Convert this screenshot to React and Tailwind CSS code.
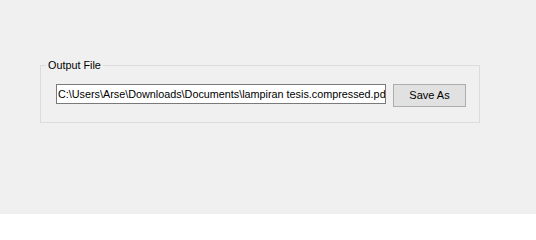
const OutputFileGroup = ({ path }) => {
  return (
    <div className="relative w-[440px] border border-[#dcdcdc] pt-[18px] pb-[15px] pl-[15px]">
      <span className="absolute -top-[7px] left-[5px] bg-[#f0f0f0] px-[2px] text-[10.8px] leading-[13px] text-black">
        Output File
      </span>
      <div className="flex items-start gap-[7px]">
        <div className="w-[330px] h-[20px] border border-[#7a7a7a] bg-white overflow-hidden whitespace-nowrap pl-[1px] text-[10.8px] leading-[18px] text-black">
          {path}
        </div>
        <button className="w-[73px] h-[23px] border border-[#adadad] bg-[#e1e1e1] text-[11px] leading-[21px] text-black">
          Save As
        </button>
      </div>
    </div>
  );
};

export default function App() {
  return (
    <div
      className="w-[536px] h-[214px] bg-[#f0f0f0] pt-[65px] pl-[40px]"
      style={{ fontFamily: '"Liberation Sans", Arial, sans-serif' }}
    >
      <OutputFileGroup path="C:\Users\Arse\Downloads\Documents\lampiran tesis.compressed.pdf" />
    </div>
  );
}
